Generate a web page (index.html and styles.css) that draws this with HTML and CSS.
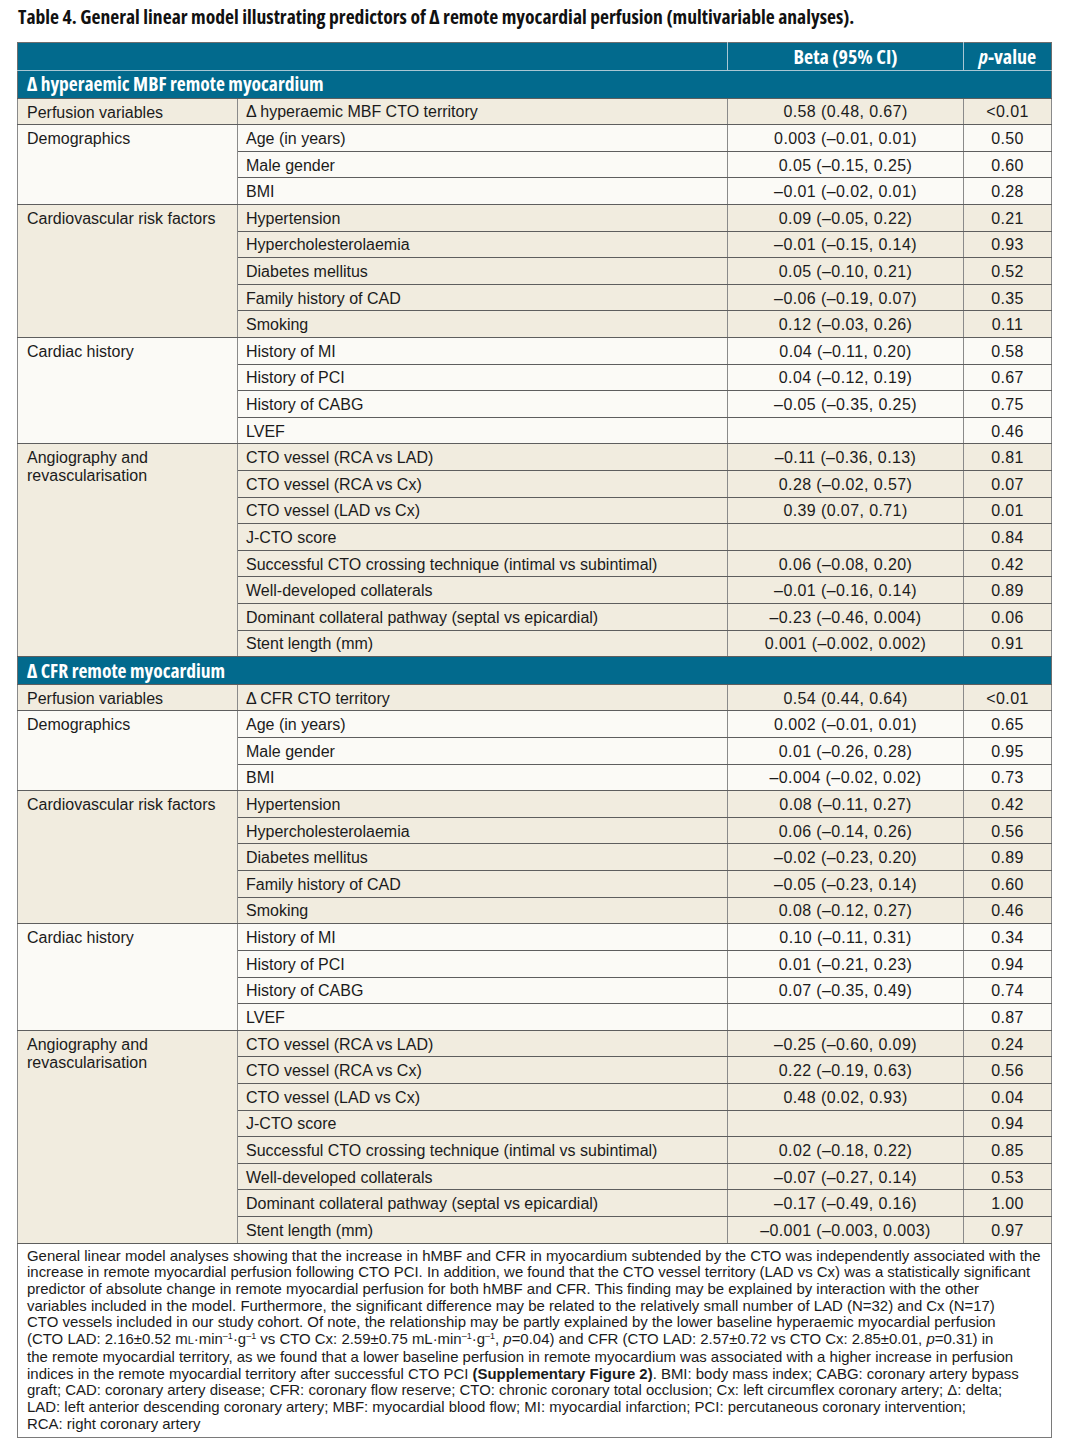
FILE: index.html
```html
<!DOCTYPE html>
<html lang="en">
<head>
<meta charset="utf-8">
<title>Table 4</title>
<link rel="stylesheet" href="styles.css">
</head>
<body>
<div class="page">
  <h1 class="caption">Table 4. General linear model illustrating predictors of Δ remote myocardial perfusion (multivariable analyses).</h1>
  <table class="tbl">
    <colgroup>
      <col class="c1"><col class="c2"><col class="c3"><col class="c4">
    </colgroup>
    <thead>
      <tr class="head">
        <th colspan="2"></th>
        <th class="hc">Beta (95% CI)</th>
        <th class="hc hp"><i>p</i>-value</th>
      </tr>
    </thead>
    <tbody>
      <tr class="sec"><td colspan="4">Δ hyperaemic MBF remote myocardium</td></tr>

      <tr class="beige"><td class="grp">Perfusion variables</td><td>Δ hyperaemic MBF CTO territory</td><td class="num">0.58 (0.48, 0.67)</td><td class="num">&lt;0.01</td></tr>

      <tr class="white"><td class="grp" rowspan="3">Demographics</td><td>Age (in years)</td><td class="num">0.003 (–0.01, 0.01)</td><td class="num">0.50</td></tr>
      <tr class="white"><td>Male gender</td><td class="num">0.05 (–0.15, 0.25)</td><td class="num">0.60</td></tr>
      <tr class="white"><td>BMI</td><td class="num">–0.01 (–0.02, 0.01)</td><td class="num">0.28</td></tr>

      <tr class="beige"><td class="grp" rowspan="5">Cardiovascular risk factors</td><td>Hypertension</td><td class="num">0.09 (–0.05, 0.22)</td><td class="num">0.21</td></tr>
      <tr class="beige"><td>Hypercholesterolaemia</td><td class="num">–0.01 (–0.15, 0.14)</td><td class="num">0.93</td></tr>
      <tr class="beige"><td>Diabetes mellitus</td><td class="num">0.05 (–0.10, 0.21)</td><td class="num">0.52</td></tr>
      <tr class="beige"><td>Family history of CAD</td><td class="num">–0.06 (–0.19, 0.07)</td><td class="num">0.35</td></tr>
      <tr class="beige"><td>Smoking</td><td class="num">0.12 (–0.03, 0.26)</td><td class="num">0.11</td></tr>

      <tr class="white"><td class="grp" rowspan="4">Cardiac history</td><td>History of MI</td><td class="num">0.04 (–0.11, 0.20)</td><td class="num">0.58</td></tr>
      <tr class="white"><td>History of PCI</td><td class="num">0.04 (–0.12, 0.19)</td><td class="num">0.67</td></tr>
      <tr class="white"><td>History of CABG</td><td class="num">–0.05 (–0.35, 0.25)</td><td class="num">0.75</td></tr>
      <tr class="white"><td>LVEF</td><td class="num"></td><td class="num">0.46</td></tr>

      <tr class="beige"><td class="grp" rowspan="8">Angiography and<br>revascularisation</td><td>CTO vessel (RCA vs LAD)</td><td class="num">–0.11 (–0.36, 0.13)</td><td class="num">0.81</td></tr>
      <tr class="beige"><td>CTO vessel (RCA vs Cx)</td><td class="num">0.28 (–0.02, 0.57)</td><td class="num">0.07</td></tr>
      <tr class="beige"><td>CTO vessel (LAD vs Cx)</td><td class="num">0.39 (0.07, 0.71)</td><td class="num">0.01</td></tr>
      <tr class="beige"><td>J-CTO score</td><td class="num"></td><td class="num">0.84</td></tr>
      <tr class="beige"><td>Successful CTO crossing technique (intimal vs subintimal)</td><td class="num">0.06 (–0.08, 0.20)</td><td class="num">0.42</td></tr>
      <tr class="beige"><td>Well-developed collaterals</td><td class="num">–0.01 (–0.16, 0.14)</td><td class="num">0.89</td></tr>
      <tr class="beige"><td>Dominant collateral pathway (septal vs epicardial)</td><td class="num">–0.23 (–0.46, 0.004)</td><td class="num">0.06</td></tr>
      <tr class="beige"><td>Stent length (mm)</td><td class="num">0.001 (–0.002, 0.002)</td><td class="num">0.91</td></tr>

      <tr class="sec"><td colspan="4">Δ CFR remote myocardium</td></tr>

      <tr class="beige"><td class="grp">Perfusion variables</td><td>Δ CFR CTO territory</td><td class="num">0.54 (0.44, 0.64)</td><td class="num">&lt;0.01</td></tr>

      <tr class="white"><td class="grp" rowspan="3">Demographics</td><td>Age (in years)</td><td class="num">0.002 (–0.01, 0.01)</td><td class="num">0.65</td></tr>
      <tr class="white"><td>Male gender</td><td class="num">0.01 (–0.26, 0.28)</td><td class="num">0.95</td></tr>
      <tr class="white"><td>BMI</td><td class="num">–0.004 (–0.02, 0.02)</td><td class="num">0.73</td></tr>

      <tr class="beige"><td class="grp" rowspan="5">Cardiovascular risk factors</td><td>Hypertension</td><td class="num">0.08 (–0.11, 0.27)</td><td class="num">0.42</td></tr>
      <tr class="beige"><td>Hypercholesterolaemia</td><td class="num">0.06 (–0.14, 0.26)</td><td class="num">0.56</td></tr>
      <tr class="beige"><td>Diabetes mellitus</td><td class="num">–0.02 (–0.23, 0.20)</td><td class="num">0.89</td></tr>
      <tr class="beige"><td>Family history of CAD</td><td class="num">–0.05 (–0.23, 0.14)</td><td class="num">0.60</td></tr>
      <tr class="beige"><td>Smoking</td><td class="num">0.08 (–0.12, 0.27)</td><td class="num">0.46</td></tr>

      <tr class="white"><td class="grp" rowspan="4">Cardiac history</td><td>History of MI</td><td class="num">0.10 (–0.11, 0.31)</td><td class="num">0.34</td></tr>
      <tr class="white"><td>History of PCI</td><td class="num">0.01 (–0.21, 0.23)</td><td class="num">0.94</td></tr>
      <tr class="white"><td>History of CABG</td><td class="num">0.07 (–0.35, 0.49)</td><td class="num">0.74</td></tr>
      <tr class="white"><td>LVEF</td><td class="num"></td><td class="num">0.87</td></tr>

      <tr class="beige"><td class="grp" rowspan="8">Angiography and<br>revascularisation</td><td>CTO vessel (RCA vs LAD)</td><td class="num">–0.25 (–0.60, 0.09)</td><td class="num">0.24</td></tr>
      <tr class="beige"><td>CTO vessel (RCA vs Cx)</td><td class="num">0.22 (–0.19, 0.63)</td><td class="num">0.56</td></tr>
      <tr class="beige"><td>CTO vessel (LAD vs Cx)</td><td class="num">0.48 (0.02, 0.93)</td><td class="num">0.04</td></tr>
      <tr class="beige"><td>J-CTO score</td><td class="num"></td><td class="num">0.94</td></tr>
      <tr class="beige"><td>Successful CTO crossing technique (intimal vs subintimal)</td><td class="num">0.02 (–0.18, 0.22)</td><td class="num">0.85</td></tr>
      <tr class="beige"><td>Well-developed collaterals</td><td class="num">–0.07 (–0.27, 0.14)</td><td class="num">0.53</td></tr>
      <tr class="beige"><td>Dominant collateral pathway (septal vs epicardial)</td><td class="num">–0.17 (–0.49, 0.16)</td><td class="num">1.00</td></tr>
      <tr class="beige"><td>Stent length (mm)</td><td class="num">–0.001 (–0.003, 0.003)</td><td class="num">0.97</td></tr>

      <tr class="foot"><td colspan="4">General linear model analyses showing that the increase in hMBF and CFR in myocardium subtended by the CTO was independently associated with the<br>increase in remote myocardial perfusion following CTO PCI. In addition, we found that the CTO vessel territory (LAD vs Cx) was a statistically significant<br>predictor of absolute change in remote myocardial perfusion for both hMBF and CFR. This finding may be explained by interaction with the other<br>variables included in the model. Furthermore, the significant difference may be related to the relatively small number of LAD (N=32) and Cx (N=17)<br>CTO vessels included in our study cohort. Of note, the relationship may be partly explained by the lower baseline hyperaemic myocardial perfusion<br>(CTO LAD: 2.16±0.52 m<span class="sc">L</span>·min<sup>–1</sup>·g<sup>–1</sup> vs CTO Cx: 2.59±0.75 mL·min<sup>–1</sup>·g<sup>–1</sup>, <i>p</i>=0.04) and CFR (CTO LAD: 2.57±0.72 vs CTO Cx: 2.85±0.01, <i>p</i>=0.31) in<br>the remote myocardial territory, as we found that a lower baseline perfusion in remote myocardium was associated with a higher increase in perfusion<br>indices in the remote myocardial territory after successful CTO PCI <b>(Supplementary Figure 2)</b>. BMI: body mass index; CABG: coronary artery bypass<br>graft; CAD: coronary artery disease; CFR: coronary flow reserve; CTO: chronic coronary total occlusion; Cx: left circumflex coronary artery; Δ: delta;<br>LAD: left anterior descending coronary artery; MBF: myocardial blood flow; MI: myocardial infarction; PCI: percutaneous coronary intervention;<br>RCA: right coronary artery</td></tr>
    </tbody>
  </table>
</div>
</body>
</html>
```
FILE: styles.css
```css
html, body {
  margin: 0;
  padding: 0;
  background: #ffffff;
}

.page {
  padding: 0 18px 0 17px;
  width: 1034px;
  font-family: "Liberation Sans", Arial, sans-serif;
  color: #1b1b1b;
}

.caption {
  margin: 0;
  height: 42px;
  box-sizing: border-box;
  padding: 5px 0 0 1px;
  font-family: "Open Sans", sans-serif;
  font-stretch: 75%;
  font-weight: bold;
  font-size: 19.6px;
  line-height: 24px;
  color: #111;
  white-space: nowrap;
}

.tbl {
  width: 1034px;
  border-collapse: collapse;
  table-layout: fixed;
  font-size: 16px;
}

.c1 { width: 220px; }
.c2 { width: 490px; }
.c3 { width: 236px; }
.c4 { width: 88px; }

.tbl td, .tbl th {
  padding: 2px 8px 0 8px;
  line-height: 18px;
  border-left: 1px solid #8a8a8a;
  border-right: 1px solid #8a8a8a;
  border-top: 1px solid #5e5e5e;
  border-bottom: 1px solid #5e5e5e;
  text-align: left;
  vertical-align: middle;
  white-space: nowrap;
}

.head th {
  background: #026a8d;
  color: #ffffff;
  font-family: "Open Sans", sans-serif;
  font-stretch: 75%;
  font-weight: bold;
  font-size: 20px;
  padding-top: 0;
  border-top: 1px solid #6e6e6e;
  border-bottom: 1px solid #a9c7d4;
  border-left: 1px solid #a9c7d4;
  border-right: 1px solid #a9c7d4;
}

.head {
  height: 28px;
}

.head th:first-child {
  border-left: 1px solid #6e6e6e;
}

.head th:last-child {
  border-right: 1px solid #6e6e6e;
}

.head .hc {
  text-align: center;
}

.sec {
  height: 27.5px;
}

.sec td {
  background: #026a8d;
  color: #ffffff;
  font-family: "Open Sans", sans-serif;
  font-stretch: 75%;
  font-weight: bold;
  font-size: 19.5px;
  padding-top: 0;
  padding-left: 9px;
  border-left: 1px solid #6e6e6e;
  border-right: 1px solid #6e6e6e;
}

.tbl tbody tr.beige,
.tbl tbody tr.white {
  height: 26.62px;
}

.beige td { background: #f1ecdf; }
.white td { background: #fbfaf6; }

.tbl td.grp {
  vertical-align: top;
  padding-top: 5px;
  padding-left: 9px;
  white-space: normal;
}

.tbl td.num {
  text-align: center;
  padding-left: 4px;
  padding-right: 4px;
  letter-spacing: 0.4px;
}

.foot td {
  background: #ffffff;
  font-size: 14.95px;
  line-height: 16.7px;
  padding: 4px 9px 5px 9px;
  border-left: 1px solid #7a7a7a;
  border-right: 1px solid #7a7a7a;
  border-bottom: 1px solid #7a7a7a;
  white-space: nowrap;
}

.foot sup {
  font-size: 9px;
  line-height: 0;
  vertical-align: 5px;
}

.foot .sc {
  font-size: 11px;
}
```
